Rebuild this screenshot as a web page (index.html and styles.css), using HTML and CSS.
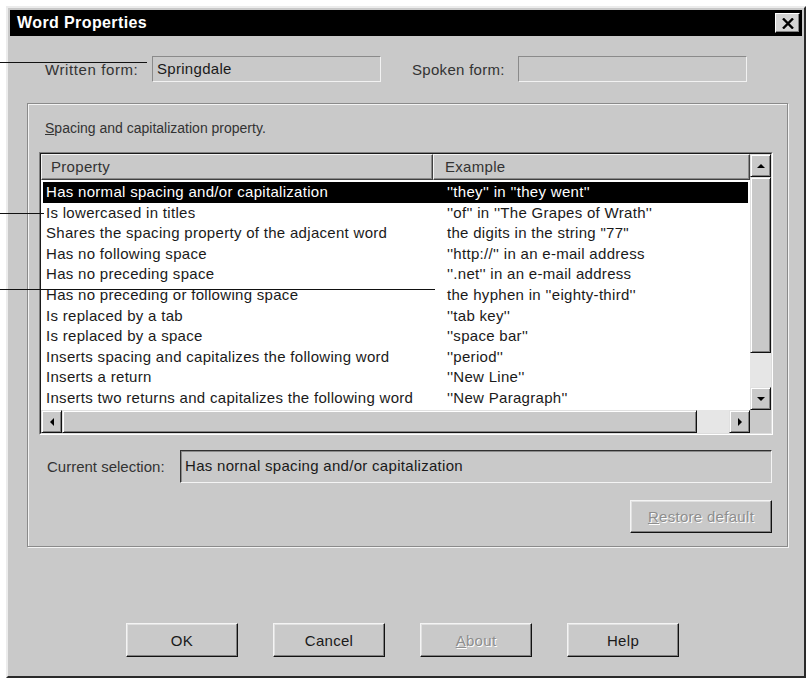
FILE: index.html
```html
<!DOCTYPE html>
<html lang="en">
<head>
    <meta charset="UTF-8">
    <title>Word Properties</title>
    <link rel="stylesheet" href="styles.css">
</head>
<body>
    <div class="callout callout-written"></div>
    <div class="callout callout-lower"></div>
    <div class="callout callout-space"></div>

    <div class="window">
        <div class="titlebar">
            <span class="title">Word Properties</span>
            <button class="close-btn">
                <svg width="12" height="11" viewBox="0 0 12 11">
                    <path d="M1 0.5 L11 10.5 M11 0.5 L1 10.5" stroke="#000" stroke-width="2.4"/>
                </svg>
            </button>
        </div>

        <div class="form-row">
            <span class="field-label label-written">Written form:</span>
            <div class="field-box">Springdale</div>
            <span class="field-label label-spoken">Spoken form:</span>
            <div class="field-box"></div>
        </div>

        <div class="group">
            <div class="group-label"><u>S</u>pacing and capitalization property.</div>

            <div class="listview">
                <div class="list-inner">
                    <div class="list-main">
                        <div class="list-header">
                            <div class="col-head col-prop">Property</div>
                            <div class="col-head col-example">Example</div>
                        </div>
                        <div class="list-body">
                            <div class="list-row selected"><span>Has normal spacing and/or capitalization</span><span>''they'' in ''they went''</span></div>
                            <div class="list-row"><span>Is lowercased in titles</span><span>''of'' in ''The Grapes of Wrath''</span></div>
                            <div class="list-row"><span>Shares the spacing property of the adjacent word</span><span>the digits in the string "77"</span></div>
                            <div class="list-row"><span>Has no following space</span><span>''http://'' in an e-mail address</span></div>
                            <div class="list-row"><span>Has no preceding space</span><span>''.net'' in an e-mail address</span></div>
                            <div class="list-row"><span>Has no preceding or following space</span><span>the hyphen in ''eighty-third''</span></div>
                            <div class="list-row"><span>Is replaced by a tab</span><span>''tab key''</span></div>
                            <div class="list-row"><span>Is replaced by a space</span><span>''space bar''</span></div>
                            <div class="list-row"><span>Inserts spacing and capitalizes the following word</span><span>''period''</span></div>
                            <div class="list-row"><span>Inserts a return</span><span>''New Line''</span></div>
                            <div class="list-row"><span>Inserts two returns and capitalizes the following word</span><span>''New Paragraph''</span></div>
                        </div>
                    </div>

                    <div class="vscroll">
                        <div class="scroll-btn"><span class="arrow arrow-up"></span></div>
                        <div class="vthumb"></div>
                        <div class="track"></div>
                        <div class="scroll-btn"><span class="arrow arrow-down"></span></div>
                    </div>

                    <div class="hscroll">
                        <div class="scroll-btn hbtn"><span class="arrow arrow-left"></span></div>
                        <div class="hthumb"></div>
                        <div class="track"></div>
                        <div class="scroll-btn hbtn"><span class="arrow arrow-right"></span></div>
                    </div>

                    <div class="corner"></div>
                </div>
            </div>

            <div class="current-row">
                <span class="current-label">Current selection:</span>
                <div class="current-box">Has nornal spacing and/or capitalization</div>
            </div>

            <div class="restore-row">
                <button class="btn restore-btn disabled"><u>R</u>estore default</button>
            </div>
        </div>

        <div class="button-row">
            <button class="btn">OK</button>
            <button class="btn">Cancel</button>
            <button class="btn disabled"><u>A</u>bout</button>
            <button class="btn">Help</button>
        </div>
    </div>
</body>
</html>
```

FILE: styles.css
```css
body {
    margin: 0;
    background: #fff;
    font-family: "Liberation Sans", Arial, sans-serif;
    font-size: 15px;
    letter-spacing: 0.3px;
    color: #1a1a1a;
}

/* callout lines from the figure */
.callout {
    position: absolute;
    left: 0;
    height: 1px;
    background: #111;
    z-index: 2;
}

.callout-written {
    top: 62px;
    width: 147px;
}

.callout-lower {
    top: 213px;
    width: 44px;
}

.callout-space {
    top: 289px;
    width: 435px;
}

.window {
    margin: 6px 0 0 6px;
    width: 800px;
    height: 672px;
    box-sizing: border-box;
    padding: 2px;
    background: #c9c9c9;
    border: 2px solid;
    border-color: #ececec #2a2a2a #2a2a2a #ececec;
}

.titlebar {
    height: 26px;
    background: #000;
    display: flex;
    align-items: center;
    justify-content: space-between;
    padding: 0 2px 0 7px;
}

.title {
    color: #fff;
    font-weight: bold;
    font-size: 16px;
    letter-spacing: 0.4px;
}

.close-btn {
    width: 25px;
    height: 20px;
    box-sizing: border-box;
    padding: 0;
    background: #d4d4d4;
    border: 1px solid;
    border-color: #fff #000 #000 #fff;
    box-shadow: inset -1px -1px #808080;
    display: flex;
    align-items: center;
    justify-content: center;
}

.form-row {
    margin-top: 20px;
    height: 26px;
    display: flex;
    align-items: center;
    padding-left: 35px;
}

.field-label {
    color: #333;
}

.label-written {
    width: 107px;
    letter-spacing: 0.6px;
}

.label-spoken {
    width: 106px;
    margin-left: 31px;
}

.field-box {
    width: 229px;
    height: 26px;
    box-sizing: border-box;
    padding-left: 4px;
    line-height: 24px;
    border: 1px solid;
    border-color: #8a8a8a #f2f2f2 #f2f2f2 #8a8a8a;
}

.group {
    margin: 21px 0 0 17px;
    width: 761px;
    height: 444px;
    box-sizing: border-box;
    padding: 16px 14px 0 11px;
    border: 1px solid #8a8a8a;
    box-shadow: inset 1px 1px #f4f4f4, 1px 1px #f4f4f4;
}

.group-label {
    line-height: 16px;
    padding-left: 6px;
    font-size: 14px;
    letter-spacing: 0;
    color: #333;
}

.listview {
    margin-top: 16px;
    width: 734px;
    height: 283px;
    box-sizing: border-box;
    border: 1px solid;
    border-color: #808080 #fff #fff #808080;
}

.list-inner {
    height: 100%;
    box-sizing: border-box;
    border: 1px solid;
    border-color: #1a1a1a #dcdcdc #dcdcdc #1a1a1a;
    display: grid;
    grid-template-columns: 1fr 21px;
    grid-template-rows: 1fr 23px;
}

.list-main {
    background: #fff;
    display: flex;
    flex-direction: column;
    overflow: hidden;
}

.list-header {
    height: 26px;
    display: flex;
    flex-shrink: 0;
}

.col-head {
    box-sizing: border-box;
    height: 26px;
    line-height: 24px;
    background: #c9c9c9;
    color: #333;
    border: 1px solid;
    border-color: #f4f4f4 #404040 #404040 #f4f4f4;
    box-shadow: inset -1px -1px #8a8a8a;
}

.col-prop {
    width: 392px;
    padding-left: 9px;
}

.col-example {
    flex: 1;
    padding-left: 11px;
}

.list-body {
    padding-top: 2px;
}

.list-row {
    display: grid;
    grid-template-columns: 401px 1fr;
    height: 20.6px;
    line-height: 20.6px;
    margin: 0 2px;
    padding-left: 3px;
    white-space: nowrap;
}

.list-row.selected {
    background: #000;
    color: #fff;
}

.vscroll {
    display: flex;
    flex-direction: column;
    background: #c9c9c9;
}

.hscroll {
    display: flex;
    background: #c9c9c9;
}

.scroll-btn {
    height: 23px;
    box-sizing: border-box;
    background: #c9c9c9;
    border: 1px solid;
    border-color: #e0e0e0 #111 #111 #e0e0e0;
    box-shadow: inset 1px 1px #fff, inset -1px -1px #808080;
    display: flex;
    align-items: center;
    justify-content: center;
    flex-shrink: 0;
}

.hbtn {
    width: 21px;
}

.vthumb {
    height: 176px;
    box-sizing: border-box;
    border: 1px solid;
    border-color: #e0e0e0 #111 #111 #e0e0e0;
    box-shadow: inset 1px 1px #fff, inset -1px -1px #808080;
}

.hthumb {
    width: 635px;
    box-sizing: border-box;
    border: 1px solid;
    border-color: #e0e0e0 #111 #111 #e0e0e0;
    box-shadow: inset 1px 1px #fff, inset -1px -1px #808080;
}

.track {
    flex: 1;
    background: #e6e6e6;
}

.corner {
    background: #c9c9c9;
}

.arrow {
    width: 0;
    height: 0;
    border: 4px solid transparent;
}

.arrow-up {
    border-bottom-color: #000;
    margin-top: -4px;
}

.arrow-down {
    border-top-color: #000;
    margin-bottom: -4px;
}

.arrow-left {
    border-right-color: #000;
    margin-left: -4px;
}

.arrow-right {
    border-left-color: #000;
    margin-right: -4px;
}

.current-row {
    margin-top: 15px;
    display: flex;
    align-items: center;
}

.current-label {
    width: 133px;
    padding-left: 8px;
    letter-spacing: 0;
    color: #333;
}

.current-box {
    width: 592px;
    height: 33px;
    box-sizing: border-box;
    padding-left: 4px;
    line-height: 30px;
    border: 1px solid;
    border-color: #303030 #f4f4f4 #f4f4f4 #303030;
    box-shadow: inset 1px 1px #8a8a8a;
}

.restore-row {
    margin-top: 17px;
    width: 733px;
    display: flex;
    justify-content: flex-end;
}

.btn {
    height: 34px;
    width: 112px;
    box-sizing: border-box;
    padding: 0;
    font-family: "Liberation Sans", Arial, sans-serif;
    font-size: 15px;
    letter-spacing: 0.3px;
    color: #1a1a1a;
    background: #c9c9c9;
    border: 1px solid;
    border-color: #f4f4f4 #111 #111 #f4f4f4;
    box-shadow: inset -1px -1px #808080, inset 1px 1px #e0e0e0;
}

.restore-btn {
    width: 142px;
    height: 33px;
}

.btn.disabled {
    color: #8e8e8e;
    text-shadow: 1px 1px #fff;
}

.button-row {
    margin-top: 76px;
    padding-left: 116px;
    display: flex;
    gap: 35px;
}
```
